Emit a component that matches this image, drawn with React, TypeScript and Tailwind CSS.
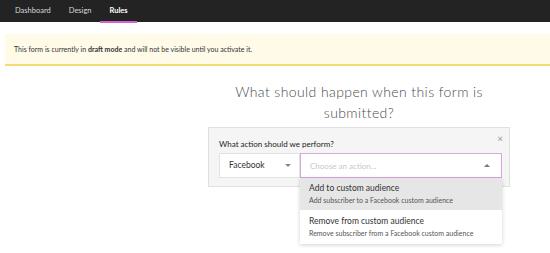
import React from "react";

export default function App() {
  return (
    <div className="w-[550px] h-[253px] bg-white overflow-hidden relative" style={{ fontFamily: "Lato, 'Noto Sans', sans-serif" }}>
      <div className="h-[22px] bg-[#232323] flex items-stretch pl-[6px] text-[7.5px]">
        <div className="flex items-center text-[#d8d8d8] px-[9px]">Dashboard</div>
        <div className="flex items-center text-[#d8d8d8] px-[9px]">Design</div>
        <div className="relative flex items-center text-white font-bold px-[9px]">
          Rules
          <div className="absolute left-0 right-0 bottom-[-1px] h-[2px] bg-[#d660d6]" />
        </div>
      </div>
      <div className="ml-[5px] mt-[12px] h-[32px] bg-[#fffbe8] border-b-2 border-[#f3dd72] flex items-center pl-[9px] text-[7px] text-[#333]">
        <span>This form is currently in <b>draft mode</b> and will not be visible until you activate it.</span>
      </div>
      <div className="ml-[208px] w-[302px] mt-[15px]">
        <div className="text-center text-[14px] leading-[21px] text-[#4a4a4a] font-light tracking-[0.4px]">
          What should happen when this form is submitted?
        </div>
        <div className="mt-[4px] bg-[#f5f5f5] border border-[#e0e0e0] h-[60px] relative px-[10px] pt-[10px]">
          <div className="absolute right-[6px] top-[3px] text-[10px] text-[#999]">×</div>
          <div className="text-[8px] text-[#222] leading-[12px]">What action should we perform?</div>
          <div className="mt-[3px] flex h-[25px] w-[283px]">
            <div className="w-[81px] bg-white border border-[#e2e2e2] flex items-center justify-between pl-[9px] pr-[8px] text-[8.5px] text-[#333]">
              <span>Facebook</span>
              <span className="w-0 h-0 border-l-[3px] border-r-[3px] border-t-[3px] border-l-transparent border-r-transparent border-t-[#888]" />
            </div>
            <div className="flex-1 bg-white border border-[#d9a6df] flex items-center justify-between pl-[9px] pr-[11px] text-[8px] text-[#c8c8c8] relative">
              <span>Choose an action...</span>
              <span className="w-0 h-0 border-l-[3px] border-r-[3px] border-b-[3px] border-l-transparent border-r-transparent border-b-[#777]" />
              <div className="absolute left-[-1px] right-[-1px] top-[24px] bg-white shadow-[0_1px_4px_rgba(0,0,0,0.18)] z-10">
                <div className="bg-[#e6e6e6] h-[32px] pl-[9px] flex flex-col justify-center">
                  <div className="text-[8.5px] text-[#333] leading-[11px]">Add to custom audience</div>
                  <div className="text-[7px] text-[#555] leading-[11px] mt-[1px]">Add subscriber to a Facebook custom audience</div>
                </div>
                <div className="bg-white h-[34px] pl-[9px] flex flex-col justify-center">
                  <div className="text-[8.5px] text-[#333] leading-[11px]">Remove from custom audience</div>
                  <div className="text-[7px] text-[#555] leading-[11px] mt-[1px]">Remove subscriber from a Facebook custom audience</div>
                </div>
              </div>
            </div>
          </div>
        </div>
      </div>
    </div>
  );
}
